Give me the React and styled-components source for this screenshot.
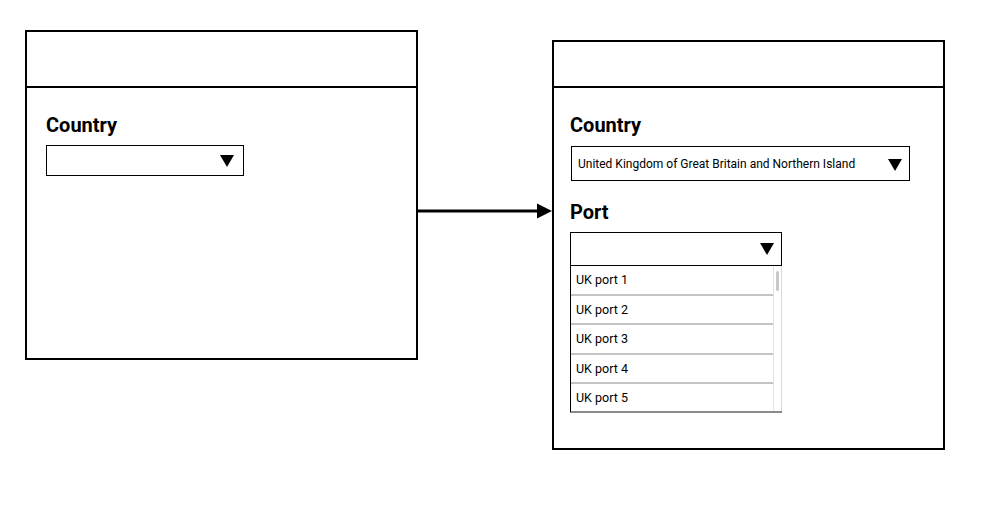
import React from "react";
import styled, { createGlobalStyle } from "styled-components";

const Global = createGlobalStyle`
  html, body { margin: 0; padding: 0; background: #fff; }
  body { font-family: Roboto, "Liberation Sans", Arial, sans-serif; color: #000; }
  * { box-sizing: border-box; }
`;

const Canvas = styled.div`
  width: 994px;
  height: 517px;
  display: flex;
  align-items: flex-start;
  padding-left: 25px;
`;

const Panel = styled.div`
  width: 393px;
  height: ${(p) => p.$h}px;
  margin-top: ${(p) => p.$top}px;
  border: 2px solid #000;
  display: flex;
  flex-direction: column;
  flex-shrink: 0;
`;

const Header = styled.div`
  height: ${(p) => p.$h}px;
  border-bottom: 2px solid #000;
  flex-shrink: 0;
`;

const Body = styled.div`
  padding: 25px 0 0 ${(p) => p.$pl}px;
  display: flex;
  flex-direction: column;
  align-items: flex-start;
`;

const Label = styled.div`
  font-size: 20px;
  font-weight: 700;
  line-height: 24px;
  margin-top: ${(p) => p.$mt || 0}px;
`;

const Select = styled.div`
  width: ${(p) => p.$w}px;
  height: ${(p) => p.$h}px;
  margin-top: ${(p) => p.$mt}px;
  margin-left: ${(p) => p.$ml || 0}px;
  border: 1px solid #000;
  display: flex;
  align-items: center;
  padding: 0 ${(p) => p.$pr}px 0 6px;
  font-size: 12px;
  gap: 8px;
`;

const SelectText = styled.span`
  flex: 1;
  white-space: nowrap;
`;

const Caret = styled.svg`
  flex-shrink: 0;
  display: block;
  margin-top: ${(p) => p.$mt || 0}px;
`;

const List = styled.div`
  width: 212px;
  display: flex;
  border-left: 1px solid #000;
  border-bottom: 2px solid #8a8a8a;
`;

const Items = styled.div`
  flex: 1;
  display: flex;
  flex-direction: column;
`;

const Item = styled.div`
  height: 29.5px;
  border-bottom: 2px solid #c4c4c4;
  font-size: 12.5px;
  padding: 0 0 0 5px;
  display: flex;
  align-items: center;
  &:last-child { border-bottom: none; height: 27px; }
`;

const Scrollbar = styled.div`
  width: 9px;
  border-left: 1px solid #e4e4e4;
  border-right: 1px solid #d8d8d8;
  padding: 5px 0 0 2px;
`;

const Thumb = styled.div`
  width: 3px;
  height: 20px;
  background: #c8c8c8;
  border-radius: 2px;
`;

const Arrow = styled.svg`
  display: block;
  flex-shrink: 0;
  margin-top: 203px;
`;

const Triangle = ({ w = 14, h = 12, mt }) => (
  <Caret width={w} height={h} viewBox={`0 0 ${w} ${h}`} $mt={mt}>
    <polygon points={`0,0 ${w},0 ${w / 2},${h}`} fill="#000" />
  </Caret>
);

export default function App() {
  const ports = ["UK port 1", "UK port 2", "UK port 3", "UK port 4", "UK port 5"];
  return (
    <>
      <Global />
      <Canvas>
        <Panel $h={330} $top={30}>
          <Header $h={56} />
          <Body $pl={19}>
            <Label>Country</Label>
            <Select $w={198} $h={31} $mt={8} $pr={9}>
              <SelectText />
              <Triangle mt={1} />
            </Select>
          </Body>
        </Panel>
        <Arrow width={134} height={16} viewBox="0 0 134 16">
          <line x1="0" y1="8" x2="120" y2="8" stroke="#000" strokeWidth="3" />
          <polygon points="119,0.5 134,8 119,15.5" fill="#000" />
        </Arrow>
        <Panel $h={410} $top={40}>
          <Header $h={46} />
          <Body $pl={16}>
            <Label>Country</Label>
            <Select $w={339} $h={35} $mt={9} $ml={1} $pr={7}>
              <SelectText>United Kingdom of Great Britain and Northern Island</SelectText>
              <Triangle mt={2} />
            </Select>
            <Label $mt={19}>Port</Label>
            <Select $w={212} $h={34} $mt={8} $pr={7}>
              <SelectText />
              <Triangle />
            </Select>
            <List>
              <Items>
                {ports.map((p) => (
                  <Item key={p}>{p}</Item>
                ))}
              </Items>
              <Scrollbar>
                <Thumb />
              </Scrollbar>
            </List>
          </Body>
        </Panel>
      </Canvas>
    </>
  );
}
